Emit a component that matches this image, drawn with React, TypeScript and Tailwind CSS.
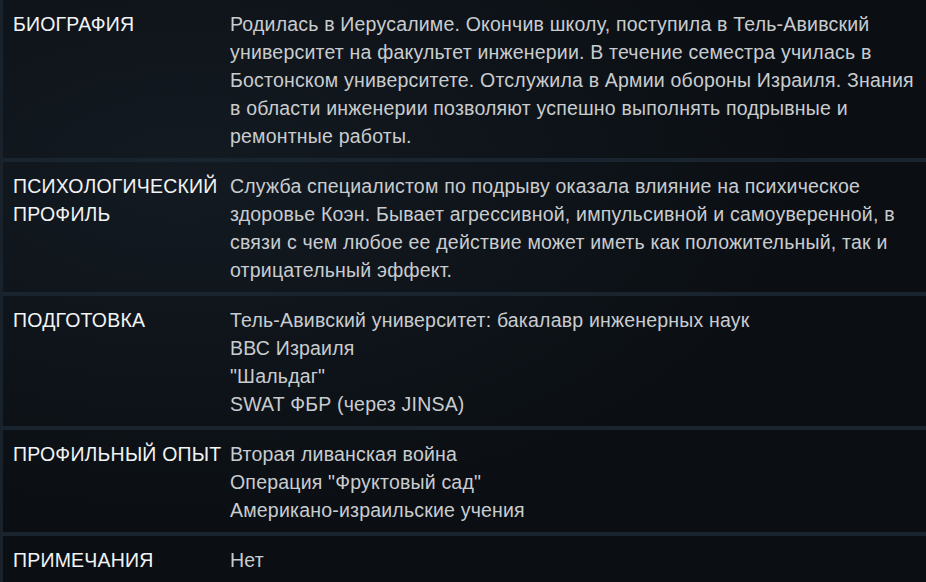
import React from 'react';

// One dossier row: label on the left, text lines on the right
interface DossierRow {
    label: string[];
    lines: string[];
}

const rows: DossierRow[] = [
    {
        label: ['БИОГРАФИЯ'],
        lines: [
            'Родилась в Иерусалиме. Окончив школу, поступила в Тель-Авивский',
            'университет на факультет инженерии. В течение семестра училась в',
            'Бостонском университете. Отслужила в Армии обороны Израиля. Знания',
            'в области инженерии позволяют успешно выполнять подрывные и',
            'ремонтные работы.',
        ],
    },
    {
        label: ['ПСИХОЛОГИЧЕСКИЙ', 'ПРОФИЛЬ'],
        lines: [
            'Служба специалистом по подрыву оказала влияние на психическое',
            'здоровье Коэн. Бывает агрессивной, импульсивной и самоуверенной, в',
            'связи с чем любое ее действие может иметь как положительный, так и',
            'отрицательный эффект.',
        ],
    },
    {
        label: ['ПОДГОТОВКА'],
        lines: [
            'Тель-Авивский университет: бакалавр инженерных наук',
            'ВВС Израиля',
            '"Шальдаг"',
            'SWAT ФБР (через JINSA)',
        ],
    },
    {
        label: ['ПРОФИЛЬНЫЙ ОПЫТ'],
        lines: [
            'Вторая ливанская война',
            'Операция "Фруктовый сад"',
            'Американо-израильские учения',
        ],
    },
    {
        label: ['ПРИМЕЧАНИЯ'],
        lines: ['Нет'],
    },
];

const App = () => {
    return (
        <div className="w-[926px] h-[582px] overflow-hidden bg-[#0b0f14] bg-[radial-gradient(ellipse_at_20%_30%,#131a21_0%,#0b0f14_60%)] font-['Liberation_Sans',Arial,sans-serif] text-[19.5px] leading-[28px]">
            <div className="flex flex-col">
                {rows.map((row, i) => (
                    <div key={i} className="flex border-l-[3px] border-[#19222b] border-b-4 border-b-[#1a242e] pt-[10px] pb-[8px] pl-[10px]">
                        {/* Label */}
                        <div className="w-[217px] shrink-0 text-[#f2f3f4] tracking-[0.2px]">
                            {row.label.map(l => (
                                <div key={l} className="whitespace-nowrap">{l}</div>
                            ))}
                        </div>
                        {/* Body */}
                        <div className="text-[#c9cccf] tracking-[0.2px]">
                            {row.lines.map((l, j) => (
                                <div key={j} className="whitespace-nowrap">{l}</div>
                            ))}
                        </div>
                    </div>
                ))}
            </div>
        </div>
    );
};

export default App;
